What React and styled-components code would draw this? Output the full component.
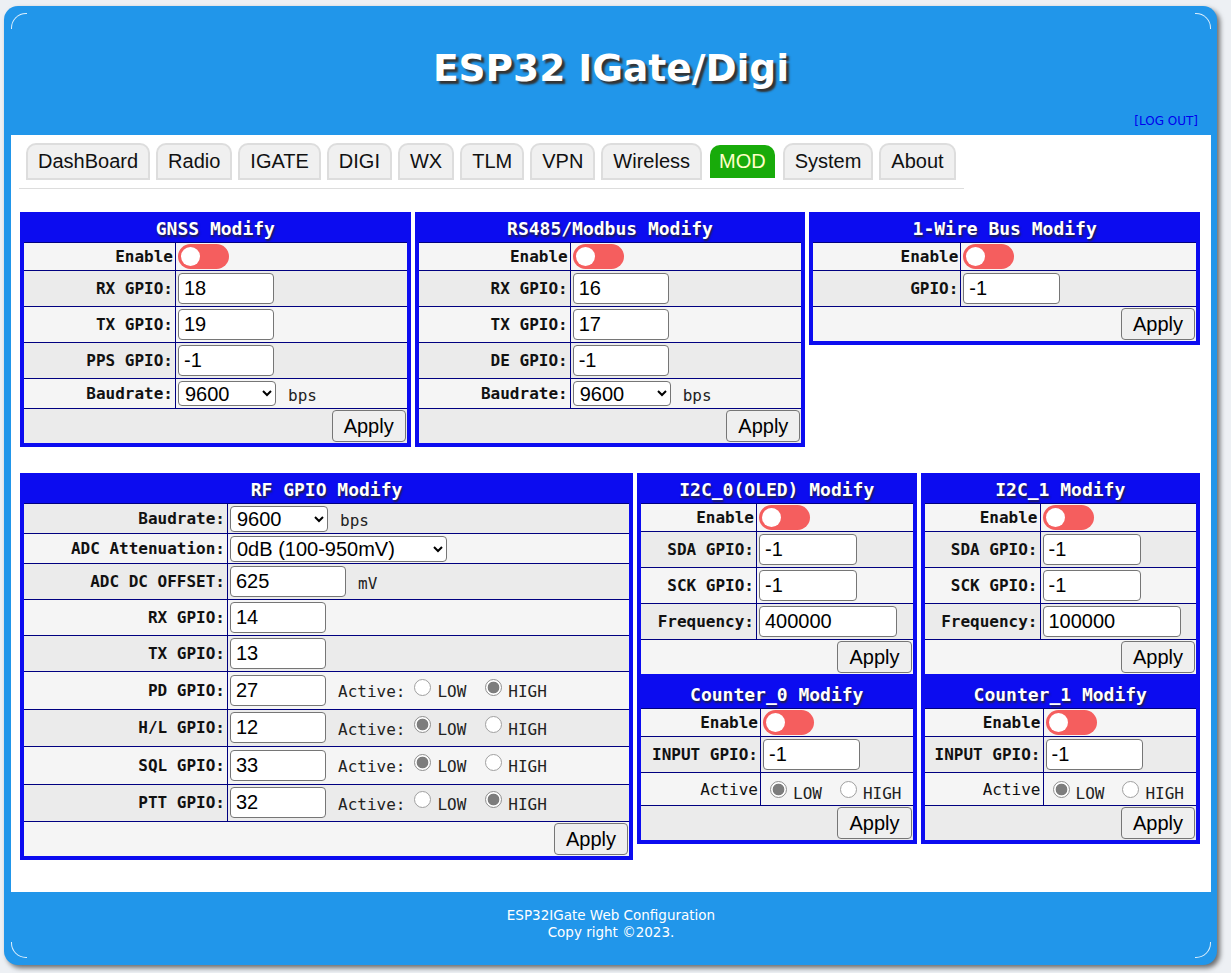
import React from 'react';
import styled, { createGlobalStyle } from 'styled-components';

const GlobalStyle = createGlobalStyle`
    html, body {
        margin: 0;
        padding: 0;
        background: #edf0f4;
    }
    body {
        font-family: "Liberation Sans", Arial, sans-serif;
    }
    * {
        box-sizing: border-box;
    }
`

const Page = styled.div`
    padding: 6px 14px 8px 4px;
`

const Frame = styled.div`
    position: relative;
    width: 1213px;
    background: #2196ea;
    border-radius: 14px;
    padding: 0 6px 0 7px;
    box-shadow: 3px 3px 5px rgba(0, 0, 0, 0.55);
`

// little white highlight arcs in the rounded corners
const Header = styled.header`
    position: relative;
    height: 129px;
    display: flex;
    flex-direction: column;
    padding-bottom: 7px;

    &::before, &::after {
        content: '';
        position: absolute;
        top: 7px;
        width: 15px;
        height: 15px;
        border-top: 1.5px solid rgba(255, 255, 255, 0.85);
    }
    &::before {
        left: 0;
        border-left: 1.5px solid rgba(255, 255, 255, 0.85);
        border-top-left-radius: 15px;
    }
    &::after {
        right: 0;
        border-right: 1.5px solid rgba(255, 255, 255, 0.85);
        border-top-right-radius: 15px;
    }
`

const Title = styled.h1`
    margin: 40px 0 0;
    height: 44px;
    line-height: 44px;
    text-align: center;
    font-family: "DejaVu Sans", Verdana, sans-serif;
    font-weight: bold;
    font-size: 37.5px;
    color: #fff;
    text-shadow: 3px 3px 2px #333;
`

const LogOut = styled.a`
    margin-top: auto;
    align-self: flex-end;
    margin-right: 13px;
    font-family: "DejaVu Sans", Verdana, sans-serif;
    font-size: 12px;
    line-height: 14px;
    color: #0000ee;
    text-decoration: none;
`

const Main = styled.main`
    background: #fff;
    padding: 8px 11px 32px 9px;
`

const TabBar = styled.nav`
    display: flex;
    gap: 6px;
    width: 945px;
    margin-left: -1px;
    padding: 0 0 8px 7px;
    border-bottom: 1px solid #ddd;
`

const Tab = styled.a`
    height: 37px;
    padding: 0 10px 1px;
    display: flex;
    align-items: center;
    font-size: 20px;
    color: #111;
    background: #f0f0f0;
    border: 2px solid #ddd;
    border-radius: 10px 10px 0 0;

    ${props => props.$active && `
        background: #18ab0a;
        border: none;
        height: 33px;
        margin: 2px 2px 0;
        padding: 0 9px 1px;
        color: #ffffc8;
    `}
`

const PanelRow = styled.div`
    display: flex;
    align-items: flex-start;
    gap: 4px;
    margin-top: ${props => props.$top}px;
`

const Stack = styled.div`
    flex: 1;
    display: flex;
    flex-direction: column;
`

const Row = styled.div`
    display: grid;
    grid-template-columns: var(--label-w) 1fr;
    height: ${props => props.$h}px;
    border-top: 1px solid #000080;
    background: #f5f5f5;
`

const ApplyRow = styled(Row)`
    display: flex;
    justify-content: flex-end;
    align-items: center;
    padding-right: 1px;
`

const Panel = styled.section`
    --label-w: ${props => props.$labelW}px;
    border: 4px solid #0c0cf0;
    background: #f5f5f5;
    ${props => props.$w ? `width: ${props.$w}px; flex: none;` : 'flex: 1;'}

    & > ${Row}:nth-child(${props => props.$flip ? 'even' : 'odd'}) {
        background: #ebebeb;
    }
`

const PanelTitle = styled.div`
    height: 26px;
    line-height: 26px;
    background: #0c0cf0;
    color: #fff;
    text-align: center;
    font-family: "DejaVu Sans Mono", monospace;
    font-weight: bold;
    font-size: 18px;
    text-shadow: 1px 2px 2px #202040;
`

const Label = styled.div`
    border-right: 1px solid #000080;
    display: flex;
    align-items: center;
    justify-content: flex-end;
    padding-right: 2px;
    font-family: "DejaVu Sans Mono", monospace;
    font-size: 16px;
    font-weight: ${props => props.$plain ? 'normal' : 'bold'};
    color: #111;
    white-space: nowrap;
`

const Value = styled.div`
    display: flex;
    align-items: center;
    padding-left: 2px;
    white-space: nowrap;
`

const TextInput = styled.input`
    width: ${props => props.$w || 96}px;
    height: 31px;
    border: 1px solid #767676;
    border-radius: 4px;
    padding: 0 5px;
    font-family: "Liberation Sans", Arial, sans-serif;
    font-size: 20px;
    color: #000;
    background: #fff;
`

const Select = styled.select`
    width: ${props => props.$w || 98}px;
    height: ${props => props.$h || 25}px;
    border: 1px solid #767676;
    border-radius: 4px;
    padding: 0 2px;
    font-family: "Liberation Sans", Arial, sans-serif;
    font-size: 20px;
    color: #000;
    background: #fff;
`

const Unit = styled.span`
    margin-left: 12px;
    margin-top: 3px;
    font-family: "DejaVu Sans Mono", monospace;
    font-size: 16px;
    color: #222;
`

const Toggle = styled.span`
    position: relative;
    display: inline-block;
    width: 51px;
    height: 25px;
    border-radius: 13px;
    background: #f55e5e;

    &::after {
        content: '';
        position: absolute;
        left: 3px;
        top: 3px;
        width: 19px;
        height: 19px;
        border-radius: 50%;
        background: #fff;
    }
`

const ActiveText = styled.span`
    margin-left: 12px;
    margin-top: 3px;
    font-family: "DejaVu Sans Mono", monospace;
    font-size: 16px;
    color: #222;
`

const Radio = styled.input.attrs({ type: 'radio', disabled: true })`
    appearance: none;
    width: 17px;
    height: 17px;
    margin: 0 6px ${props => props.$lift ? 6 : 0}px ${props => props.$ml}px;
    border-radius: 50%;
    border: 1px solid #a0a0a0;
    background: #fff;

    &:checked {
        border-color: #8f8f8f;
        background: radial-gradient(circle, #7d7d7d 0 5.5px, #fff 6.2px);
    }
`

const RadioText = styled.span`
    margin-top: ${props => props.$drop ? 9 : 3}px;
    font-family: "DejaVu Sans Mono", monospace;
    font-size: 16px;
    color: #222;
`

const ApplyButton = styled.button`
    height: 32px;
    padding: 0 11px;
    font-family: "Liberation Sans", Arial, sans-serif;
    font-size: 20px;
    color: #000;
    background: #efefef;
    border: 1px solid #767676;
    border-radius: 4px;
`

const Footer = styled.footer`
    position: relative;
    height: 73px;
    padding-top: 15px;
    text-align: center;
    color: #fff;
    font-family: "DejaVu Sans", Verdana, sans-serif;
    font-size: 13.5px;
    line-height: 17px;

    &::before, &::after {
        content: '';
        position: absolute;
        bottom: 7px;
        width: 15px;
        height: 15px;
        border-bottom: 1.5px solid rgba(255, 255, 255, 0.85);
    }
    &::before {
        left: 0;
        border-left: 1.5px solid rgba(255, 255, 255, 0.85);
        border-bottom-left-radius: 15px;
    }
    &::after {
        right: 0;
        border-right: 1.5px solid rgba(255, 255, 255, 0.85);
        border-bottom-right-radius: 15px;
    }
`

const tabs = ['DashBoard', 'Radio', 'IGATE', 'DIGI', 'WX', 'TLM', 'VPN', 'Wireless', 'MOD', 'System', 'About'];

function Field({ label, h = 36, plain, children }) {
    return (
        <Row $h={h}>
            <Label $plain={plain}>{label}</Label>
            <Value>{children}</Value>
        </Row>
    )
}

function Apply() {
    return (
        <ApplyRow $h={35}>
            <ApplyButton>Apply</ApplyButton>
        </ApplyRow>
    )
}

function BaudSelect({ h }) {
    return (
        <Select $h={h} defaultValue="9600">
            <option>1200</option>
            <option>2400</option>
            <option>4800</option>
            <option>9600</option>
            <option>19200</option>
            <option>38400</option>
            <option>115200</option>
        </Select>
    )
}

function SerialPanel({ title, rx, tx, extraLabel }) {
    return (
        <Panel $labelW={152}>
            <PanelTitle>{title}</PanelTitle>
            <Field label="Enable" h={28}><Toggle /></Field>
            <Field label="RX GPIO:"><TextInput defaultValue={rx} /></Field>
            <Field label="TX GPIO:"><TextInput defaultValue={tx} /></Field>
            <Field label={extraLabel}><TextInput defaultValue="-1" /></Field>
            <Field label="Baudrate:" h={30}><BaudSelect /><Unit>bps</Unit></Field>
            <Apply />
        </Panel>
    )
}

function GpioActive({ label, value, high }) {
    return (
        <Field label={label} h={37.5}>
            <TextInput defaultValue={value} />
            <ActiveText>Active:</ActiveText>
            <Radio $ml={9} $lift defaultChecked={!high} />
            <RadioText>LOW</RadioText>
            <Radio $ml={19} $lift defaultChecked={high} />
            <RadioText>HIGH</RadioText>
        </Field>
    )
}

function I2cPanel({ title, freq }) {
    return (
        <Panel $labelW={116}>
            <PanelTitle>{title}</PanelTitle>
            <Field label="Enable" h={28}><Toggle /></Field>
            <Field label="SDA GPIO:"><TextInput $w={98} defaultValue="-1" /></Field>
            <Field label="SCK GPIO:"><TextInput $w={98} defaultValue="-1" /></Field>
            <Field label="Frequency:"><TextInput $w={138} defaultValue={freq} /></Field>
            <Apply />
        </Panel>
    )
}

function CounterPanel({ title, labelW }) {
    return (
        <Panel $labelW={labelW}>
            <PanelTitle>{title}</PanelTitle>
            <Field label="Enable" h={28}><Toggle /></Field>
            <Field label="INPUT GPIO:"><TextInput $w={97} defaultValue="-1" /></Field>
            <Field label="Active" h={33} plain>
                <Radio $ml={7} defaultChecked />
                <RadioText $drop>LOW</RadioText>
                <Radio $ml={18} />
                <RadioText $drop>HIGH</RadioText>
            </Field>
            <Apply />
        </Panel>
    )
}

export default function App() {
    return (
        <React.Fragment>
            <GlobalStyle />
            <Page>
                <Frame>
                    <Header>
                        <Title>ESP32 IGate/Digi</Title>
                        <LogOut href="#">[LOG OUT]</LogOut>
                    </Header>
                    <Main>
                        <TabBar>
                            {tabs.map(t => (
                                <Tab key={t} $active={t === 'MOD'}>{t}</Tab>
                            ))}
                        </TabBar>

                        <PanelRow $top={23}>
                            <SerialPanel title="GNSS Modify" rx="18" tx="19" extraLabel="PPS GPIO:" />
                            <SerialPanel title="RS485/Modbus Modify" rx="16" tx="17" extraLabel="DE GPIO:" />
                            <Panel $labelW={148}>
                                <PanelTitle>1-Wire Bus Modify</PanelTitle>
                                <Field label="Enable" h={28}><Toggle /></Field>
                                <Field label="GPIO:"><TextInput $w={97} defaultValue="-1" /></Field>
                                <Apply />
                            </Panel>
                        </PanelRow>

                        <PanelRow $top={26}>
                            <Panel $w={613} $labelW={204} $flip>
                                <PanelTitle>RF GPIO Modify</PanelTitle>
                                <Field label="Baudrate:" h={30}><BaudSelect h={26} /><Unit>bps</Unit></Field>
                                <Field label="ADC Attenuation:" h={30}>
                                    <Select $w={217} $h={26} defaultValue="0dB (100-950mV)">
                                        <option>0dB (100-950mV)</option>
                                        <option>2.5dB (100-1250mV)</option>
                                        <option>6dB (150-1750mV)</option>
                                        <option>11dB (150-2450mV)</option>
                                    </Select>
                                </Field>
                                <Field label="ADC DC OFFSET:">
                                    <TextInput $w={116} defaultValue="625" />
                                    <Unit>mV</Unit>
                                </Field>
                                <Field label="RX GPIO:"><TextInput defaultValue="14" /></Field>
                                <Field label="TX GPIO:"><TextInput defaultValue="13" /></Field>
                                <GpioActive label="PD GPIO:" value="27" high />
                                <GpioActive label="H/L GPIO:" value="12" />
                                <GpioActive label="SQL GPIO:" value="33" />
                                <GpioActive label="PTT GPIO:" value="32" high />
                                <Apply />
                            </Panel>
                            <Stack>
                                <I2cPanel title="I2C_0(OLED) Modify" freq="400000" />
                                <CounterPanel title="Counter_0 Modify" labelW={120} />
                            </Stack>
                            <Stack>
                                <I2cPanel title="I2C_1 Modify" freq="100000" />
                                <CounterPanel title="Counter_1 Modify" labelW={119} />
                            </Stack>
                        </PanelRow>
                    </Main>
                    <Footer>
                        <div>ESP32IGate Web Configuration</div>
                        <div>Copy right ©2023.</div>
                    </Footer>
                </Frame>
            </Page>
        </React.Fragment>
    )
}
